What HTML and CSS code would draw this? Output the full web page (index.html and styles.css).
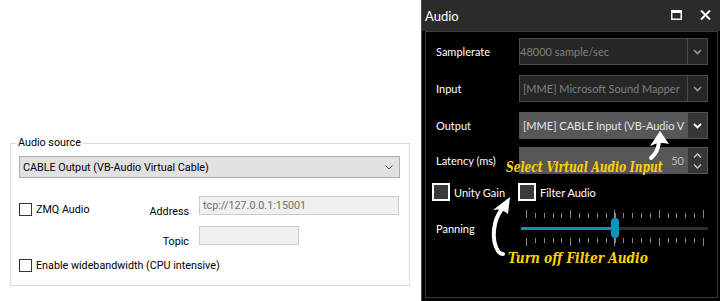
FILE: index.html
```html
<!DOCTYPE html>
<html lang="en">
<head>
    <meta charset="UTF-8">
    <title>Audio settings</title>
    <link rel="stylesheet" href="styles.css">
</head>
<body>
    <div class="page">
        <section class="left">
            <fieldset class="group">
                <legend>Audio source</legend>
                <div class="combo">
                    <span>CABLE Output (VB-Audio Virtual Cable)</span>
                    <svg width="8" height="5" viewBox="0 0 8 5"><path d="M0.5 0.5 L4 4 L7.5 0.5" fill="none" stroke="#555" stroke-width="1"/></svg>
                </div>
                <div class="opts">
                    <div class="opt-left">
                        <label class="check"><span class="box"></span>ZMQ Audio</label>
                        <span class="field-label">Address</span>
                    </div>
                    <div class="textbox">tcp://127.0.0.1:15001</div>
                    <span class="field-label topic">Topic</span>
                    <div class="textbox short"></div>
                    <label class="check wide"><span class="box"></span>Enable widebandwidth (CPU intensive)</label>
                </div>
            </fieldset>
        </section>

        <section class="win">
            <header class="titlebar">
                <span class="title">Audio</span>
                <span class="controls">
                    <svg width="11" height="10" viewBox="0 0 11 10"><rect x="0.75" y="1.25" width="9.5" height="8" fill="none" stroke="#fff" stroke-width="1.5"/><rect x="0" y="0" width="11" height="3" fill="#fff"/></svg>
                    <svg width="11" height="10" viewBox="0 0 11 10"><path d="M1 0.5 L10 9.5 M10 0.5 L1 9.5" stroke="#fff" stroke-width="2"/></svg>
                </span>
            </header>
            <div class="win-body">
                <div class="panel">
                    <div class="frow">
                        <span class="dlabel">Samplerate</span>
                        <div class="dcombo">
                            <span class="val flush">48000 sample/sec</span>
                            <span class="btn"><svg width="9" height="6" viewBox="0 0 9 6"><path d="M1 1 L4.5 4.5 L8 1" fill="none" stroke="#9a9a9a" stroke-width="1.6"/></svg></span>
                        </div>
                    </div>
                    <div class="frow">
                        <span class="dlabel">Input</span>
                        <div class="dcombo">
                            <span class="val">[MME] Microsoft Sound Mapper</span>
                            <span class="btn"><svg width="9" height="6" viewBox="0 0 9 6"><path d="M1 1 L4.5 4.5 L8 1" fill="none" stroke="#9a9a9a" stroke-width="1.6"/></svg></span>
                        </div>
                    </div>
                    <div class="frow">
                        <span class="dlabel">Output</span>
                        <div class="dcombo active">
                            <span class="val">[MME] CABLE Input (VB-Audio V</span>
                            <span class="btn"><svg width="9" height="6" viewBox="0 0 9 6"><path d="M1 1 L4.5 4.5 L8 1" fill="none" stroke="#fff" stroke-width="1.8"/></svg></span>
                        </div>
                    </div>
                    <div class="frow latency">
                        <span class="dlabel">Latency (ms)</span>
                        <div class="dcombo active">
                            <span class="val num">50</span>
                            <span class="btn spin">
                                <svg width="9" height="5" viewBox="0 0 9 5"><path d="M1 4.5 L4.5 1 L8 4.5" fill="none" stroke="#ccc" stroke-width="1.3"/></svg>
                                <svg width="9" height="5" viewBox="0 0 9 5"><path d="M1 0.5 L4.5 4 L8 0.5" fill="none" stroke="#ccc" stroke-width="1.3"/></svg>
                            </span>
                        </div>
                    </div>
                    <div class="checks">
                        <label class="dcheck"><span class="dbox"></span>Unity Gain</label>
                        <label class="dcheck"><span class="dbox"></span>Filter Audio</label>
                    </div>
                    <div class="frow panning">
                        <span class="dlabel">Panning</span>
                        <div class="slider">
                            <div class="ticks top"></div>
                            <div class="track">
                                <span class="fill"></span>
                                <span class="thumb"></span>
                                <span class="rest"></span>
                            </div>
                            <div class="ticks bottom"></div>
                        </div>
                    </div>
                </div>
            </div>

            <span class="note note-output">Select Virtual Audio Input</span>
            <span class="note note-filter">Turn off Filter Audio</span>
            <svg class="arrows" width="299" height="301" viewBox="0 0 299 301">
                <path d="M238 131 L228 146 Q237 141 247 144 Z" fill="#fff"/>
                <path d="M237 142 Q236 152 229 158" fill="none" stroke="#fff" stroke-width="4" stroke-linecap="round"/>
                <path d="M88 197 L71 210 Q79 208 86 214 Z" fill="#fff"/>
                <path d="M80 209 C71 220 69 240 76 251 Q78 254 81 254" fill="none" stroke="#fff" stroke-width="4" stroke-linecap="round"/>
            </svg>
        </section>
    </div>
</body>
</html>
```

FILE: styles.css
```css
* {
    box-sizing: border-box;
}
body {
    margin: 0;
    background: #ffffff;
    font-family: Roboto, 'Noto Sans', sans-serif;
    font-size: 10.75px;
    color: #000000;
}
.page {
    display: flex;
    width: 720px;
    height: 301px;
    overflow: hidden;
}

/* left: windows group box */
.left {
    width: 421px;
    padding: 136px 0 0 10px;
}
.group {
    width: 400px;
    height: 150px;
    margin: 0;
    padding: 6px 9px 0 8px;
    border: 1px solid #dcdcdc;
}
.group legend {
    margin-left: -3px;
    padding: 0 2px;
    line-height: 14px;
}
.combo {
    display: flex;
    align-items: center;
    justify-content: space-between;
    height: 22px;
    padding: 0 6px 0 3px;
    background: #e1e1e1;
    border: 1px solid #adadad;
}
.opts {
    display: grid;
    grid-template-columns: 170px 200px;
    grid-template-rows: 19px 19px auto;
    column-gap: 10px;
    row-gap: 11px;
    margin-top: 18px;
}
.opt-left {
    display: flex;
    justify-content: space-between;
    align-items: flex-start;
}
.check {
    display: flex;
    align-items: center;
    gap: 4px;
    line-height: 13px;
}
.opt-left .check {
    margin-top: 7px;
}
.box {
    width: 13px;
    height: 13px;
    border: 1px solid #333333;
    background: #ffffff;
}
.field-label {
    padding-top: 9px;
    line-height: 13px;
}
.topic {
    text-align: right;
}
.textbox {
    height: 19px;
    padding: 0 3px;
    line-height: 17px;
    color: #6d6d6d;
    background: #f0f0f0;
    border: 1px solid #cccccc;
}
.textbox.short {
    width: 100px;
}
.check.wide {
    grid-column: 1 / 3;
    margin-top: 3px;
}

/* right: dark audio window */
.win {
    position: relative;
    display: flex;
    flex-direction: column;
    width: 299px;
    height: 301px;
    background: #000000;
    border-left: 1px solid #4a4a4a;
    font-family: Lato, 'Noto Sans', sans-serif;
    font-size: 11px;
    color: #ffffff;
}
.titlebar {
    display: flex;
    align-items: center;
    justify-content: space-between;
    height: 31px;
    padding: 0 9px 0 3px;
    background: #2b2b2b;
    font-size: 13px;
}
.controls {
    display: flex;
    gap: 18px;
    margin-top: -1px;
}
.win-body {
    flex: 1;
    padding: 0 2px 3px 3px;
}
.panel {
    height: 100%;
    padding: 6px 9px 0 10px;
    border: 1px solid #3a3a3a;
}
.frow {
    display: grid;
    grid-template-columns: 83px 189px;
    align-items: center;
    height: 27px;
    margin-top: 10px;
}
.frow:first-child {
    margin-top: 0;
}
.frow.latency {
    margin-top: 8px;
}
.dcombo {
    display: flex;
    height: 27px;
    background: #262626;
    border: 1px solid #4b4b4b;
    color: #808080;
}
.dcombo .val {
    flex: 1;
    display: flex;
    align-items: center;
    padding: 0 6px 0 3px;
    overflow: hidden;
    white-space: nowrap;
}
.dcombo .val.flush {
    padding-left: 0;
}
.dcombo .btn {
    display: flex;
    flex-direction: column;
    align-items: center;
    justify-content: center;
    width: 20px;
    border-left: 1px solid #4b4b4b;
}
.dcombo.active {
    border-color: #555555;
    color: #e4e4e4;
}
.dcombo.active .val {
    background: #575757;
}
.dcombo.active .btn {
    background: #363636;
    border-left-color: #555555;
}
.dcombo .val.num {
    justify-content: flex-end;
    padding-right: 3px;
    color: #bdbdbd;
}
.btn.spin {
    gap: 6px;
}
.checks {
    display: grid;
    grid-template-columns: 86px auto;
    height: 18px;
    margin: 9px 0 0 -4px;
}
.dcheck {
    display: flex;
    align-items: center;
    gap: 4px;
}
.dbox {
    width: 18px;
    height: 18px;
    background: #3a3a3a;
    border: 2px solid #ffffff;
}
.frow.panning {
    height: 36px;
    margin-top: 9px;
}
.slider {
    display: flex;
    flex-direction: column;
}
.ticks {
    height: 8px;
    margin: 0 4px 0 7px;
    background-image:
        repeating-linear-gradient(to right, #8a8a8a 0 1px, transparent 1px 44.25px),
        repeating-linear-gradient(to right, #8a8a8a 0 1px, transparent 1px 8.85px);
    background-repeat: no-repeat;
}
.ticks.top {
    background-size: 100% 8px, 100% 5px;
    background-position: 0 0, 0 100%;
}
.ticks.bottom {
    background-size: 100% 8px, 100% 5px;
    background-position: 0 0, 0 0;
}
.track {
    display: flex;
    align-items: center;
    height: 20px;
    padding-left: 2px;
}
.fill {
    width: 90px;
    height: 3px;
    background: #1590b4;
}
.thumb {
    width: 8px;
    height: 20px;
    border-radius: 4px;
    background: #0b92bf;
}
.rest {
    flex: 1;
    height: 3px;
    background: #2e2e2e;
}

/* annotations drawn over the screenshot */
.note {
    position: absolute;
    font-family: 'DejaVu Serif Condensed', 'DejaVu Serif', serif;
    font-weight: bold;
    font-style: italic;
    font-size: 15px;
    line-height: 15px;
    color: #ffd200;
    white-space: nowrap;
    transform-origin: left center;
}
.note-output {
    left: 84px;
    top: 160px;
    transform: scaleX(0.79);
}
.note-filter {
    left: 86px;
    top: 251px;
    transform: scaleX(0.9);
}
.arrows {
    position: absolute;
    left: 0;
    top: 0;
}
```
